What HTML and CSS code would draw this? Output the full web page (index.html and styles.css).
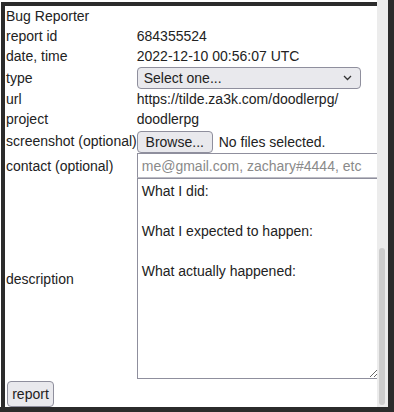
FILE: index.html
```html
<!DOCTYPE html>
<html lang="en">
<head>
<meta charset="utf-8"/>
<meta content="width=device-width, initial-scale=1" name="viewport"/>
<title>Bug Reporter</title>
<link rel="stylesheet" href="styles.css">
</head>
<body>
<div class="window">
  <div class="page">
    <form class="report-form">
      <div class="title">Bug Reporter</div>
      <table class="fields">
        <tr><td class="label">report id</td><td>684355524</td></tr>
        <tr><td class="label">date, time</td><td>2022-12-10 00:56:07 UTC</td></tr>
        <tr>
          <td class="label">type</td>
          <td>
            <div class="select-wrap">
              <select class="type-select">
                <option>Select one...</option>
                <option>bug</option>
                <option>feature request</option>
                <option>other</option>
              </select>
              <svg class="chevron" width="9" height="6" viewBox="0 0 9 6"><path d="M1 1 L4.5 4.5 L8 1" fill="none" stroke="#333" stroke-width="1.3"/></svg>
            </div>
          </td>
        </tr>
        <tr><td class="label">url</td><td>https://tilde.za3k.com/doodlerpg/</td></tr>
        <tr><td class="label">project</td><td>doodlerpg</td></tr>
        <tr>
          <td class="label">screenshot (optional)</td>
          <td class="file-cell"><button type="button" class="btn browse">Browse...</button><span class="file-name">No files selected.</span></td>
        </tr>
        <tr>
          <td class="label">contact (optional)</td>
          <td><input class="contact" type="text" placeholder="me@gmail.com, zachary#4444, etc"/></td>
        </tr>
        <tr>
          <td class="label">description</td>
          <td><textarea class="description">What I did:

What I expected to happen:

What actually happened:
</textarea></td>
        </tr>
      </table>
      <button type="button" class="btn submit">report</button>
    </form>
  </div>
  <div class="scrollbar"><div class="thumb"></div></div>
</div>
</body>
</html>
```

FILE: styles.css
```css
body {
  margin: 0;
  font-family: "Liberation Sans", Arial, sans-serif;
  font-size: 14px;
  color: #222;
  background: #fff;
}
.window {
  display: flex;
  height: 412px;
  box-sizing: border-box;
  padding-left: 1px;
  border-right: 6px solid #2b2b2b;
  border-bottom: 5px solid #2b2b2b;
}
.page {
  flex: 1;
  overflow: hidden;
  margin-top: 2px;
  padding-left: 1px;
  border-left: 4px solid #2b2b2b;
  border-top: 4px solid #2b2b2b;
}
.title {
  line-height: 20px;
}
.fields {
  border-spacing: 0;
}
.fields td {
  padding: 0;
  line-height: 20px;
  white-space: nowrap;
}
.fields td.label {
  width: 131px;
}
.select-wrap {
  position: relative;
  width: 224px;
  margin-top: 1px;
}
.type-select {
  -webkit-appearance: none;
  appearance: none;
  display: block;
  width: 224px;
  height: 22px;
  box-sizing: border-box;
  padding: 0 6px;
  font: inherit;
  color: #222;
  background: #e9e9ed;
  border: 1px solid #8f8f9d;
  border-radius: 4px;
}
.chevron {
  position: absolute;
  right: 9px;
  top: 8px;
  pointer-events: none;
}
.btn {
  font: inherit;
  color: #222;
  background: #e9e9ed;
  border: 1px solid #8f8f9d;
  border-radius: 4px;
  box-sizing: border-box;
}
.file-cell {
  padding-top: 2px !important;
}
.browse {
  width: 76px;
  height: 22px;
  padding: 0;
  vertical-align: middle;
}
.file-name {
  margin-left: 6px;
  vertical-align: middle;
}
.contact {
  display: block;
  width: 250px;
  height: 25px;
  box-sizing: border-box;
  margin: 0;
  padding: 0 4px;
  font: inherit;
  border: 1px solid #8f8f9d;
  border-bottom-color: #bcbcc4;
  border-radius: 0;
}
.contact::placeholder {
  color: #8a8a8a;
}
.description {
  display: block;
  width: 242px;
  height: 201px;
  box-sizing: border-box;
  margin: 0;
  padding: 2px 4px;
  font: inherit;
  line-height: 20px;
  color: #222;
  border: 1px solid #8f8f9d;
  border-radius: 0;
}
.submit {
  display: block;
  margin: 2px 0 0 1px;
  width: 47px;
  height: 26px;
  padding: 0;
}
.scrollbar {
  width: 11px;
  display: flex;
  flex-direction: column;
  justify-content: flex-end;
  padding-bottom: 2px;
  box-sizing: border-box;
  background: #ececec;
}
.thumb {
  height: 157px;
  margin: 0 3px 0 2px;
  border-radius: 3px;
  background: #cdcdcd;
}
```
